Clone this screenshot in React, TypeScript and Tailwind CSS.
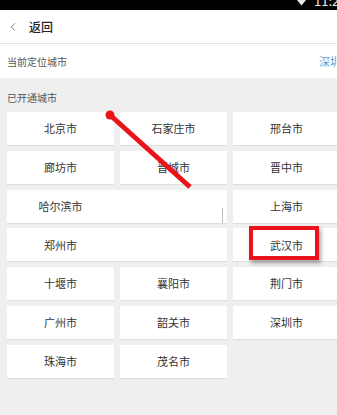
import { ChevronLeft } from 'lucide-react'

type City = { name: string; wide?: boolean; boxed?: boolean; tick?: boolean }

const cities: City[] = [
  { name: '北京市' },
  { name: '石家庄市' },
  { name: '邢台市' },
  { name: '廊坊市' },
  { name: '晋城市' },
  { name: '晋中市' },
  { name: '哈尔滨市', wide: true, tick: true },
  { name: '上海市' },
  { name: '郑州市', wide: true },
  { name: '武汉市', boxed: true },
  { name: '十堰市' },
  { name: '襄阳市' },
  { name: '荆门市' },
  { name: '广州市' },
  { name: '韶关市' },
  { name: '深圳市' },
  { name: '珠海市' },
  { name: '茂名市' },
]

export default function App() {
  return (
    <div
      className="relative w-[337px] h-[415px] overflow-hidden bg-[#efefef]"
      style={{ fontFamily: '"Noto Sans CJK SC", "Noto Sans", sans-serif' }}
    >
      {/* Status bar */}
      <div className="relative h-[10px] bg-black overflow-hidden">
        <svg className="absolute left-[297px] top-0" width="9" height="6" viewBox="0 0 9 6">
          <path d="M0 0 L9 0 L4.5 5.5 Z" fill="#e8e8e8" />
        </svg>
        <span className="absolute left-[314px] top-[-6px] text-[13px] leading-none text-[#e8e8e8]">11:2</span>
      </div>

      {/* Header */}
      <div className="flex h-[34px] items-center bg-white border-b border-[#e3e3e3]">
        <ChevronLeft size={14} strokeWidth={1.4} className="ml-[6px] text-[#666]" />
        <span className="ml-[9px] text-[12px] font-medium text-[#222]">返回</span>
      </div>

      {/* Current location */}
      <div className="flex h-[34px] items-center justify-between bg-white pl-[7px] pr-0">
        <span className="text-[10px] text-[#555]">当前定位城市</span>
        <span className="text-[11px] text-[#4fa3dc] whitespace-nowrap -mr-[4px]">深圳</span>
      </div>

      {/* Opened cities */}
      <div className="flex h-[34px] items-center pt-[4px] pl-[7px]">
        <span className="text-[10px] text-[#555]">已开通城市</span>
      </div>

      <div className="grid grid-cols-[107px_107px_107px] gap-x-[6px] gap-y-[5.8px] pl-[7px] w-[400px]">
        {cities.map(c => (
          <div
            key={c.name}
            className={`relative flex h-[33px] items-center bg-white shadow-[0_1px_0_#dedede] ${c.wide ? 'col-span-2' : ''}`}
          >
            <span className={`${c.wide ? 'w-[107px]' : 'w-full'} text-center text-[11px] text-[#333]`}>
              {c.name}
            </span>
            {c.tick && <span className="absolute right-[4px] bottom-0 h-[15px] w-px bg-[#bdbdbd]" />}
            {c.boxed && (
              <span className="absolute left-[16px] top-[-2px] h-[34px] w-[70px] border-[4px] border-[#e8141a] shadow-[2px_3px_4px_rgba(0,0,0,0.35)]" />
            )}
          </div>
        ))}
      </div>

      {/* Red arrow annotation */}
      <svg className="absolute left-0 top-0 pointer-events-none" width="337" height="415">
        <line x1="110" y1="115" x2="190" y2="187" stroke="#e8141a" strokeWidth="5" />
        <circle cx="110" cy="115" r="4.5" fill="#e8141a" />
      </svg>
    </div>
  )
}
